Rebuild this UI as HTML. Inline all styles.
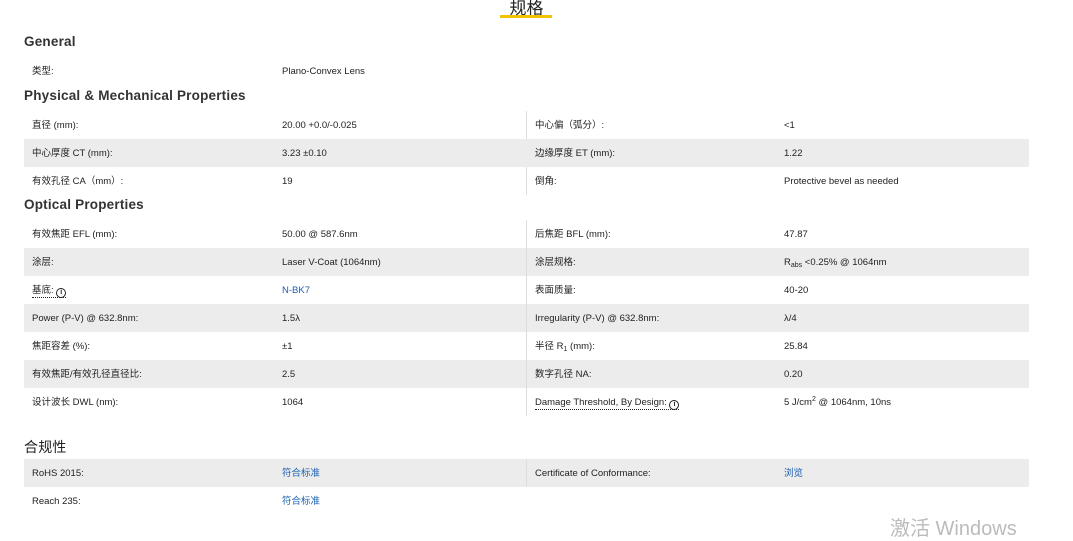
<!DOCTYPE html>
<html><head><meta charset="utf-8"><style>
*{margin:0;padding:0;box-sizing:border-box}
body{width:1073px;height:534px;background:#fff;font-family:"Liberation Sans","Noto Sans CJK SC",sans-serif;color:#222;position:relative;overflow:hidden;font-size:9.5px}
.t{position:absolute;left:0;width:1053px;text-align:center;top:-6px;font-size:17px;color:#222}
.ul{position:absolute;left:500px;width:52px;top:15px;height:3px;background:#f2c300}
h3{position:absolute;left:24px;font-size:13.5px;font-weight:bold;color:#333;letter-spacing:.2px}
.r{position:absolute;left:24px;width:1005px;height:28px}
.r.s{background:#ececec}
.r>span{position:absolute;top:1px;line-height:28px;white-space:nowrap}
.a{left:8px}.b{left:258px}.c{left:511px}.d{left:760px}
.v{position:absolute;left:526px;width:1px;background:#ddd}
a{color:#1a5fb4;text-decoration:none}
.i{display:inline-block;width:10px;height:10px;border:1.3px solid #222;border-radius:50%;font-size:7px;line-height:7.5px;text-align:center;font-weight:bold;vertical-align:-1px}
.dot{border-bottom:1px dotted #222;padding-bottom:1px}
.sb{font-size:7px;position:relative;top:2px}
.sp{font-size:7px;position:relative;top:-4px}
.w{position:absolute;left:890px;top:512px;font-size:20px;color:#bbb}
</style></head><body>
<div class="t">规格</div><div class="ul"></div>
<h3 style="top:34px">General</h3>
<div class="r" style="top:57px"><span class="a">类型:</span><span class="b">Plano-Convex Lens</span></div>
<h3 style="top:88px">Physical &amp; Mechanical Properties</h3>
<div class="v" style="top:111px;height:84px"></div>
<div class="r" style="top:111px"><span class="a">直径 (mm):</span><span class="b">20.00 +0.0/-0.025</span><span class="c">中心偏（弧分）:</span><span class="d">&lt;1</span></div>
<div class="r s" style="top:139px"><span class="a">中心厚度 CT (mm):</span><span class="b">3.23 ±0.10</span><span class="c">边缘厚度 ET (mm):</span><span class="d">1.22</span></div>
<div class="r" style="top:167px"><span class="a">有效孔径 CA（mm）:</span><span class="b">19</span><span class="c">倒角:</span><span class="d">Protective bevel as needed</span></div>
<h3 style="top:197px">Optical Properties</h3>
<div class="r" style="top:220px"><span class="a">有效焦距 EFL (mm):</span><span class="b">50.00 @ 587.6nm</span><span class="c">后焦距 BFL (mm):</span><span class="d">47.87</span></div>
<div class="r s" style="top:248px"><span class="a">涂层:</span><span class="b">Laser V-Coat (1064nm)</span><span class="c">涂层规格:</span><span class="d">R<span class="sb">abs</span> &lt;0.25% @ 1064nm</span></div>
<div class="r" style="top:276px"><span class="a"><span class="dot">基底: <span class="i">i</span></span></span><span class="b"><a>N-BK7</a></span><span class="c">表面质量:</span><span class="d">40-20</span></div>
<div class="r s" style="top:304px"><span class="a">Power (P-V) @ 632.8nm:</span><span class="b">1.5λ</span><span class="c">Irregularity (P-V) @ 632.8nm:</span><span class="d">λ/4</span></div>
<div class="r" style="top:332px"><span class="a">焦距容差 (%):</span><span class="b">±1</span><span class="c">半径 R<span class="sb">1</span> (mm):</span><span class="d">25.84</span></div>
<div class="r s" style="top:360px"><span class="a">有效焦距/有效孔径直径比:</span><span class="b">2.5</span><span class="c">数字孔径 NA:</span><span class="d">0.20</span></div>
<div class="r" style="top:388px"><span class="a">设计波长 DWL (nm):</span><span class="b">1064</span><span class="c"><span class="dot">Damage Threshold, By Design: <span class="i">i</span></span></span><span class="d">5 J/cm<span class="sp">2</span> @ 1064nm, 10ns</span></div>
<div class="v" style="top:220px;height:196px"></div>
<h3 style="top:437px;font-weight:normal;font-size:14px;color:#222">合规性</h3>
<div class="r s" style="top:459px"><span class="a">RoHS 2015:</span><span class="b"><a>符合标准</a></span><span class="c">Certificate of Conformance:</span><span class="d"><a>浏览</a></span></div>
<div class="v" style="top:459px;height:28px"></div>
<div class="r" style="top:487px"><span class="a">Reach 235:</span><span class="b"><a>符合标准</a></span></div>
<div class="w">激活 Windows</div>
</body></html>
